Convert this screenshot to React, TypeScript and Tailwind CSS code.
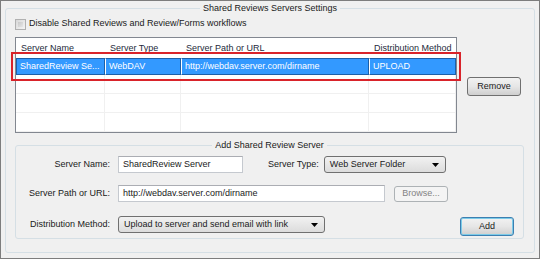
import React from 'react';

const cols = ['w-[89px]', 'w-[76px]', 'w-[188px]', 'w-[87px]'];

const headers = ['Server Name', 'Server Type', 'Server Path or URL', 'Distribution Method'];
const selected = ['SharedReview Se...', 'WebDAV', 'http://webdav.server.com/dirname', 'UPLOAD'];

const Arrow = () => (
    <svg width="7" height="4" viewBox="0 0 7 4" className="shrink-0">
        <path d="M0 0 H7 L3.5 4 Z" fill="#000" />
    </svg>
);

const Combo = ({ text, width }: { text: string; width: string }) => (
    <div className={`${width} h-[17px] flex items-center justify-between pl-[5px] pr-[6px] rounded-[3px] border border-[#707070] bg-gradient-to-b from-[#f2f2f2] to-[#dcdcdc]`}>
        <span>{text}</span>
        <Arrow />
    </div>
);

const TextBox = ({ text, width }: { text: string; width: string }) => (
    <div className={`${width} h-[17px] flex items-center pl-[4px] border border-[#c5c9cf] border-t-[#abadb3] bg-white`}>
        {text}
    </div>
);

export default function App() {
    return (
        <div className="w-[540px] h-[259px] bg-[#f0f0f0] border border-[#7d7d7d] pt-[1px] px-[4px] text-[9px] text-[#1a1a1a]" style={{ fontFamily: '"Liberation Sans", Arial, sans-serif' }}>
            <fieldset className="h-[251px] border border-[#d5dfe5] rounded-[3px] px-[9px]">
                <legend className="mx-auto px-[3px] leading-[12px]">Shared Reviews Servers Settings</legend>

                <div className="flex items-center gap-[3px] mt-[4px] h-[12px]">
                    <div className="w-[11px] h-[11px] border border-[#b1b1b1] bg-gradient-to-br from-[#d8d8d8] to-[#f4f4f4] p-[2px]">
                        <div className="w-full h-full bg-gradient-to-br from-[#c8c8c8] to-[#e6e6e6]" />
                    </div>
                    <span>Disable Shared Reviews and Review/Forms workflows</span>
                </div>

                <div className="flex mt-[7px]">
                    <div className="relative w-[442px] h-[96px] border border-[#828790] bg-white">
                        <div className="flex h-[19px] items-end pb-[2px]">
                            {headers.map((h, i) => (
                                <div key={h} className={`${cols[i]} pl-[5px] text-[#1e2a3b]`}>{h}</div>
                            ))}
                        </div>
                        <div className="flex h-[17px] mt-[1px]">
                            {selected.map((c, i) => (
                                <div key={i} className={`${cols[i]} pl-[3px] flex items-center text-white bg-[#3399ff] border border-[#1c5fa8] ${i > 0 ? 'border-l-white' : ''}`}>{c}</div>
                            ))}
                        </div>
                        {[0, 1, 2].map((r) => (
                            <div key={r} className="flex h-[19px] border-b border-[#f0f0f0]">
                                {cols.map((w, i) => (
                                    <div key={i} className={`${w} border-r border-[#f0f0f0]`} />
                                ))}
                            </div>
                        ))}
                        <div className="absolute left-[-5px] top-[14px] w-[450px] h-[29px] border-[2.5px] border-[#d9232a]" />
                    </div>

                    <div className="ml-[10px] mt-[40px] w-[54px] h-[19px] flex items-center justify-center rounded-[3px] border border-[#707070] bg-gradient-to-b from-[#f2f2f2] via-[#e6e6e6] to-[#cfcfcf]">
                        Remove
                    </div>
                </div>

                <fieldset className="mt-[6px] w-[509px] h-[100px] border border-[#d5dfe5] rounded-[3px]">
                    <legend className="mx-auto px-[3px] leading-[12px]">Add Shared Review Server</legend>

                    <div className="flex items-center mt-[5px]">
                        <div className="w-[94px] text-right">Server Name:</div>
                        <div className="ml-[8px]"><TextBox text="SharedReview Server" width="w-[125px]" /></div>
                        <div className="ml-[25px]">Server Type:</div>
                        <div className="ml-[5px]"><Combo text="Web Server Folder" width="w-[122px]" /></div>
                    </div>

                    <div className="flex items-center mt-[12px]">
                        <div className="w-[94px] text-right">Server Path or URL:</div>
                        <div className="ml-[8px]"><TextBox text="http://webdav.server.com/dirname" width="w-[267px]" /></div>
                        <div className="ml-[9px] w-[54px] h-[16px] flex items-center justify-center rounded-[3px] border border-[#adb2b5] bg-[#f4f4f4] text-[#838383]">
                            Browse...
                        </div>
                    </div>

                    <div className="flex items-center mt-[11px]">
                        <div className="w-[94px] text-right">Distribution Method:</div>
                        <div className="ml-[8px]"><Combo text="Upload to server and send email with link" width="w-[207px]" /></div>
                        <div className="ml-[135px] mt-[4px] w-[54px] h-[19px] flex items-center justify-center rounded-[3px] border border-[#3c7fb1] shadow-[inset_0_0_0_1px_#7ccbe8] bg-gradient-to-b from-[#f2f2f2] via-[#e6e6e6] to-[#cfcfcf]">
                            Add
                        </div>
                    </div>
                </fieldset>
            </fieldset>
        </div>
    );
}
